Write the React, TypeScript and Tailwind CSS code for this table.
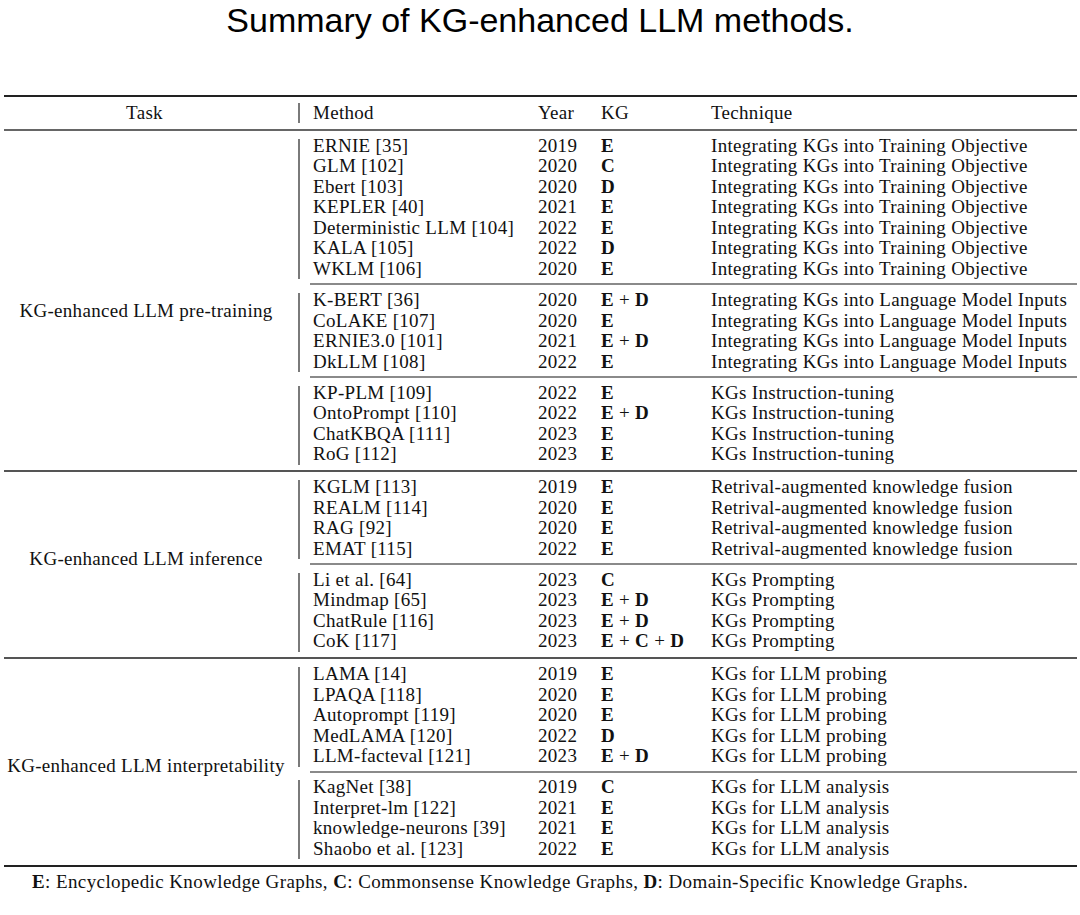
type Row = { method: string; year: string; kg: string[] };

type SubGroup = { technique: string; rows: Row[] };

type Group = { task: string; shift: string; subs: SubGroup[] };

const r = (method: string, year: string, kg: string): Row => ({
  method,
  year,
  kg: kg.split('+'),
});

const groups: Group[] = [
  {
    task: 'KG-enhanced LLM pre-training',
    shift: 'mt-[21px]',
    subs: [
      {
        technique: 'Integrating KGs into Training Objective',
        rows: [
          r('ERNIE [35]', '2019', 'E'),
          r('GLM [102]', '2020', 'C'),
          r('Ebert [103]', '2020', 'D'),
          r('KEPLER [40]', '2021', 'E'),
          r('Deterministic LLM [104]', '2022', 'E'),
          r('KALA [105]', '2022', 'D'),
          r('WKLM [106]', '2020', 'E'),
        ],
      },
      {
        technique: 'Integrating KGs into Language Model Inputs',
        rows: [
          r('K-BERT [36]', '2020', 'E+D'),
          r('CoLAKE [107]', '2020', 'E'),
          r('ERNIE3.0 [101]', '2021', 'E+D'),
          r('DkLLM [108]', '2022', 'E'),
        ],
      },
      {
        technique: 'KGs Instruction-tuning',
        rows: [
          r('KP-PLM [109]', '2022', 'E'),
          r('OntoPrompt [110]', '2022', 'E+D'),
          r('ChatKBQA [111]', '2023', 'E'),
          r('RoG [112]', '2023', 'E'),
        ],
      },
    ],
  },
  {
    task: 'KG-enhanced LLM inference',
    shift: 'mb-[11px]',
    subs: [
      {
        technique: 'Retrival-augmented knowledge fusion',
        rows: [
          r('KGLM [113]', '2019', 'E'),
          r('REALM [114]', '2020', 'E'),
          r('RAG [92]', '2020', 'E'),
          r('EMAT [115]', '2022', 'E'),
        ],
      },
      {
        technique: 'KGs Prompting',
        rows: [
          r('Li et al. [64]', '2023', 'C'),
          r('Mindmap [65]', '2023', 'E+D'),
          r('ChatRule [116]', '2023', 'E+D'),
          r('CoK [117]', '2023', 'E+C+D'),
        ],
      },
    ],
  },
  {
    task: 'KG-enhanced LLM interpretability',
    shift: 'mt-[8px]',
    subs: [
      {
        technique: 'KGs for LLM probing',
        rows: [
          r('LAMA [14]', '2019', 'E'),
          r('LPAQA [118]', '2020', 'E'),
          r('Autoprompt [119]', '2020', 'E'),
          r('MedLAMA [120]', '2022', 'D'),
          r('LLM-facteval [121]', '2023', 'E+D'),
        ],
      },
      {
        technique: 'KGs for LLM analysis',
        rows: [
          r('KagNet [38]', '2019', 'C'),
          r('Interpret-lm [122]', '2021', 'E'),
          r('knowledge-neurons [39]', '2021', 'E'),
          r('Shaobo et al. [123]', '2022', 'E'),
        ],
      },
    ],
  },
];

function KgCell({ kg }: { kg: string[] }) {
  return (
    <span>
      {kg.map((k, i) => (
        <span key={i}>
          {i > 0 && ' + '}
          <b className="font-bold">{k}</b>
        </span>
      ))}
    </span>
  );
}

function Cols({ a, b, c, d }: { a: React.ReactNode; b: React.ReactNode; c: React.ReactNode; d: React.ReactNode }) {
  return (
    <div className="grid h-[20.5px] grid-cols-[225px_63px_110px_1fr] leading-[20.5px] whitespace-nowrap">
      <span>{a}</span>
      <span>{b}</span>
      <span>{c}</span>
      <span>{d}</span>
    </div>
  );
}

function SubBlock({ sub, top, first, last }: { sub: SubGroup; top: string; first: boolean; last: boolean }) {
  return (
    <div>
      {!first && <div className="ml-[12px] h-[2px] bg-[#8a8a8a]" />}
      <div className={`flex ${first ? top : 'pt-[4.75px]'} ${last ? 'pb-[5.5px]' : 'pb-[4px]'}`}>
        <div className="mt-[3px] w-[2px] shrink-0 bg-[#7a7a7a]" />
        <div className="flex-1 pl-[13px]">
          {sub.rows.map((row) => (
            <Cols
              key={row.method}
              a={row.method}
              b={row.year}
              c={<KgCell kg={row.kg} />}
              d={sub.technique}
            />
          ))}
        </div>
      </div>
    </div>
  );
}

export default function App() {
  return (
    <div className="h-[915px] w-[1080px] bg-white text-[#111]">
      <h1 className="h-[40px] text-center font-['Liberation_Sans',Arial,sans-serif] text-[34px] leading-[40px] text-black">
        Summary of KG-enhanced LLM methods.
      </h1>

      <div className="ml-[4px] mt-[55px] w-[1073px] font-['Liberation_Serif','Times_New_Roman',serif] text-[19px] tracking-[0.3px]">
        <div className="h-[2px] bg-[#222]" />

        {/* header */}
        <div className="flex h-[32px]">
          <div className="w-[294px] pr-[13px] pt-[5.75px] text-center leading-[20.5px]">Task</div>
          <div className="mb-[5.75px] mt-[5.75px] flex flex-1">
            <div className="w-[2px] bg-[#7a7a7a]" />
            <div className="flex-1 pl-[13px]">
              <Cols a="Method" b="Year" c="KG" d="Technique" />
            </div>
          </div>
        </div>
        <div className="h-[1.5px] bg-[#666]" />

        {groups.map((g, gi) => (
          <div key={g.task}>
            {gi > 0 && <div className="h-[2px] bg-[#555]" />}
            <div className="flex">
              <div className="flex w-[284px] items-center justify-center whitespace-nowrap">
                <span className={g.shift}>{g.task}</span>
              </div>
              <div className="ml-[10px] flex-1">
                {g.subs.map((s, si) => (
                  <SubBlock
                    key={s.technique}
                    sub={s}
                    top={gi === 0 ? 'pt-[5.25px]' : 'pt-[4.75px]'}
                    first={si === 0}
                    last={si === g.subs.length - 1}
                  />
                ))}
              </div>
            </div>
          </div>
        ))}

        <div className="h-[2px] bg-[#222]" />

        <p className="mt-[5px] pl-[28px] leading-[20.5px] tracking-[0.4px] whitespace-nowrap">
          <b>E</b>: Encyclopedic Knowledge Graphs, <b>C</b>: Commonsense Knowledge Graphs, <b>D</b>: Domain-Specific
          Knowledge Graphs.
        </p>
      </div>
    </div>
  );
}
